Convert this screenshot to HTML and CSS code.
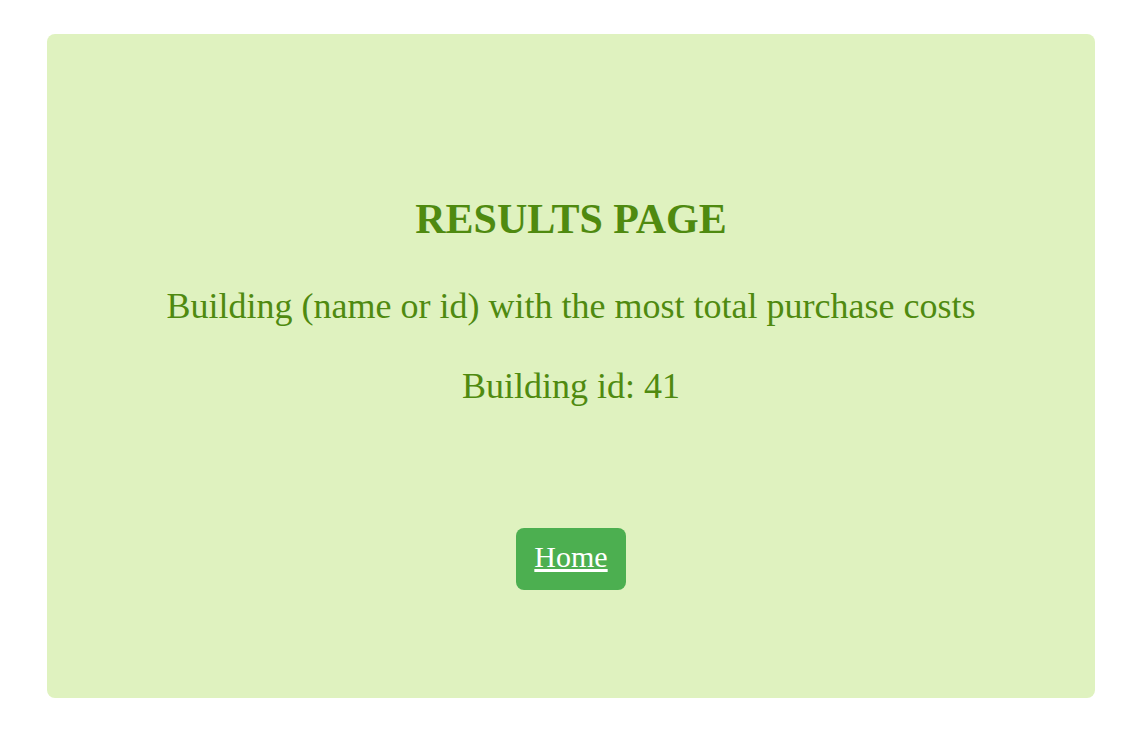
FILE: index.html
```html
<!DOCTYPE html>
<html>
<head>
<meta charset="utf-8">
<link rel="stylesheet" href="styles.css">
</head>
<body>
<div class="card">
  <h1 class="title">RESULTS PAGE</h1>
  <p class="question">Building (name or id) with the most total purchase costs</p>
  <p class="answer">Building id: 41</p>
  <a class="btn" href="#">Home</a>
</div>
</body>
</html>
```

FILE: styles.css
```css
html, body {
  margin: 0;
  padding: 0;
  background: #ffffff;
}
body {
  padding: 34px 35px 0 47px;
  font-family: "Liberation Serif", "Times New Roman", serif;
}
.card {
  background: #dff2bf;
  color: #4f8a10;
  border-radius: 8px;
  height: 664px;
  box-sizing: border-box;
  display: flex;
  flex-direction: column;
  align-items: center;
  padding-top: 161px;
}
.title {
  margin: 0;
  font-size: 42px;
  font-weight: bold;
  line-height: 48px;
}
.question {
  margin: 43px 0 0;
  font-size: 36px;
  line-height: 40px;
}
.answer {
  margin: 40px 0 0;
  font-size: 36px;
  line-height: 40px;
}
.btn {
  margin-top: 122px;
  background: #4caf50;
  color: #ffffff;
  border-radius: 8px;
  font-size: 30px;
  padding: 12px 18px 16px;
  line-height: 34px;
}
```
